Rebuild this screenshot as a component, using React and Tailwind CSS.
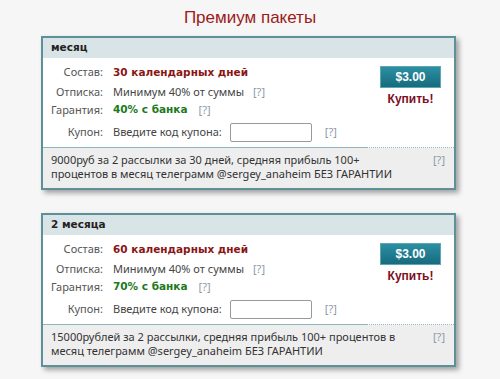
const plans = [
  {
    name: 'месяц',
    days: '30 календарных дней',
    guarantee: '40% с банка',
    price: '$3.00',
    note: ['9000руб за 2 рассылки за 30 дней, средняя прибыль 100+', 'процентов в месяц телеграмм @sergey_anaheim БЕЗ ГАРАНТИИ'],
  },
  {
    name: '2 месяца',
    days: '60 календарных дней',
    guarantee: '70% с банка',
    price: '$3.00',
    note: ['15000рублей за 2 рассылки, средняя прибыль 100+ процентов в', 'месяц телеграмм @sergey_anaheim БЕЗ ГАРАНТИИ'],
  },
];

const Help = ({ className = '' }) => (
  <span className={`text-[#8d9aa6] ${className}`}>[?]</span>
);

const Row = ({ label, children, className = '' }) => (
  <div className={`flex items-center ${className}`}>
    <div className="w-[60px] shrink-0 text-right text-[#555]">{label}:</div>
    <div className="ml-[10px] flex items-center">{children}</div>
  </div>
);

const bold = "font-['DejaVu_Sans',sans-serif] font-bold text-[10.5px]";

const PlanCard = ({ plan }) => (
  <div className="w-[415px] ml-[41px] border-2 border-[#5d9097] bg-white shadow-[3px_3px_5px_rgba(0,0,0,0.35)]">
    <div className={`h-[20px] bg-[#d9e4e6] pl-[8px] flex items-center text-[#222] ${bold}`}>
      {plan.name}
    </div>
    <div className="flex pt-[5px] pb-[3px]">
      <div className="flex-1">
        <Row label="Состав" className="h-[19px]">
          <span className={`text-[#8b1515] ${bold}`}>{plan.days}</span>
        </Row>
        <Row label="Отписка" className="h-[18px] mt-[1px]">
          <span className="text-[#444]">Минимум 40% от суммы</span>
          <Help className="ml-[9px]" />
        </Row>
        <Row label="Гарантия" className="h-[18px]">
          <span className={`text-[#1d7a1d] ${bold}`}>{plan.guarantee}</span>
          <Help className="ml-[11px]" />
        </Row>
        <Row label="Купон" className="h-[24px] mt-[1px]">
          <span className="text-[#444]">Введите код купона:</span>
          <input className="ml-[8px] w-[82px] h-[19px] border border-[#999] rounded-[2px] bg-white" />
          <Help className="ml-[13px]" />
        </Row>
      </div>
      <div className="w-[75px] mr-[6px] pt-[3px] flex flex-col items-center">
        <button className="w-[61px] h-[22px] bg-gradient-to-b from-[#2c8fa3] to-[#176b7e] text-white font-bold text-[12px] border border-[#5fa6b4] font-['Liberation_Sans',sans-serif]">
          {plan.price}
        </button>
        <div className="mt-[2px] font-bold text-[12px] text-[#7d0f1f] font-['Liberation_Sans',sans-serif]">
          Купить!
        </div>
      </div>
    </div>
    <div className="flex h-px">
      <div className="flex-1 bg-[#8fb6bc]" />
      <div className="w-[88px] border-t border-dotted border-[#8fb6bc]" />
    </div>
    <div className="bg-[#eeeeee] flex pl-[8px] pr-[9px] pt-[5px] pb-[8px] leading-[13.5px]">
      <div className="flex-1 text-[#333] whitespace-nowrap">
        {plan.note[0]}
        <br />
        {plan.note[1]}
      </div>
      <Help />
    </div>
  </div>
);

export default function App() {
  return (
    <div className="w-[500px] h-[379px] bg-[#f6f6f6] font-['Noto_Sans',Arial,sans-serif] text-[11px] overflow-hidden">
      <h1 className="pt-[5px] h-[36px] text-center text-[17px] text-[#9b1b1b] font-['Liberation_Sans',Arial,sans-serif]">
        Премиум пакеты
      </h1>
      <PlanCard plan={plans[0]} />
      <div className="h-[23px]" />
      <PlanCard plan={plans[1]} />
    </div>
  );
}
